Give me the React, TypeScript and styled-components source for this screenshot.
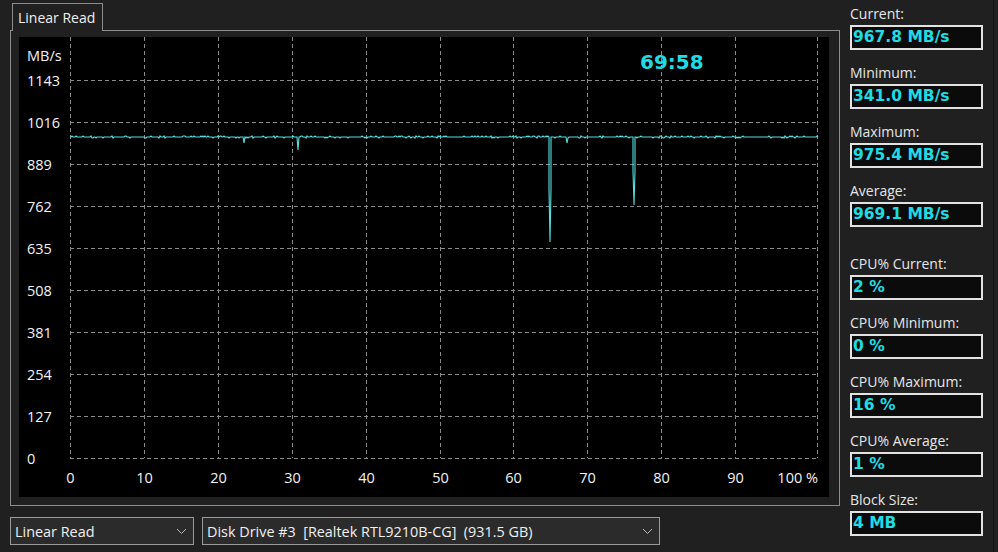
import styled, { createGlobalStyle } from "styled-components";

const GlobalStyle = createGlobalStyle`
  html, body {
    margin: 0;
    padding: 0;
    background: #202020;
  }
  body {
    font-family: "Open Sans", "Noto Sans", sans-serif;
  }
`;

const Window = styled.div`
  width: 998px;
  height: 552px;
  display: flex;
  background: #202020;
  overflow: hidden;
  color: #ececec;
`;

const Main = styled.div`
  width: 840px;
  display: flex;
  flex-direction: column;
  padding: 3px 0 0 10px;
  box-sizing: border-box;
`;

const TabStrip = styled.div`
  display: flex;
  padding-left: 2px;
  height: 27px;
`;

const Tab = styled.div`
  position: relative;
  z-index: 1;
  border: 1px solid #8c8c8c;
  border-bottom: none;
  background: #202020;
  padding: 0 7px 0 5px;
  margin-bottom: -1px;
  font-size: 14px;
  line-height: 27px;
  color: #f0f0f0;
`;

const Panel = styled.div`
  width: 830px;
  height: 476px;
  border: 1px solid #8c8c8c;
  padding: 6px 10px 8px 8px;
  box-sizing: border-box;
`;

const ChartBox = styled.div`
  width: 810px;
  height: 460px;
  background: #000;
  font-family: "Open Sans", "Noto Sans", sans-serif;

  svg {
    display: block;
  }
`;

const Controls = styled.div`
  display: flex;
  gap: 8px;
  margin-top: 11px;
`;

const Combo = styled.div<{ $w: number }>`
  width: ${(p) => p.$w}px;
  height: 28px;
  box-sizing: border-box;
  border: 1px solid #9a9a9a;
  background: #2b2b2b;
  display: flex;
  align-items: center;
  justify-content: space-between;
  padding: 0 6px 0 4px;
  font-size: 14.4px;
  color: #f0f0f0;
  white-space: pre;
`;

const Sidebar = styled.div`
  width: 154px;
  box-sizing: border-box;
  padding: 4px 0 0 10px;
  border-right: 1px solid #131313;
  display: flex;
  flex-direction: column;
`;

const Stat = styled.div<{ $gapTop?: number }>`
  display: flex;
  flex-direction: column;
  gap: 1px;
  margin-top: ${(p) => p.$gapTop ?? 0}px;
  margin-bottom: 13px;
`;

const StatLabel = styled.div`
  font-size: 14px;
  line-height: 20px;
  color: #e6e6e6;
`;

const StatBox = styled.div`
  width: 133px;
  height: 25px;
  box-sizing: border-box;
  border: 2px solid #e2e2e2;
  background: #0b0b0b;
  padding-left: 1px;
  font-family: "DejaVu Sans", Verdana, sans-serif;
  font-weight: bold;
  font-size: 15.5px;
  line-height: 21px;
  color: #1fdbe3;
`;

const Chevron = () => (
  <svg width="11" height="7" viewBox="0 0 11 7">
    <path d="M1 1 L5.5 5.5 L10 1" fill="none" stroke="#b8b8b8" strokeWidth="1" />
  </svg>
);

// chart coordinates (origin at the black area's top-left)
const GX0 = 51;
const GSTEP_X = 73.9;
const GX_END = 799;
const GY0 = 43;
const GSTEP = 42;

const yLabels = ["1143", "1016", "889", "762", "635", "508", "381", "254", "127", "0"];
const xLabels = ["0", "10", "20", "30", "40", "50", "60", "70", "80", "90"];

function buildLine(): string {
  const pts: string[] = [];
  let seed = 7;
  const rnd = () => {
    seed = (seed * 9301 + 49297) % 233280;
    return seed / 233280;
  };
  const spikes: Record<number, number[]> = {
    225: [106],
    279: [113],
    530: [152],
    531: [205],
    532: [152],
    548: [106],
    614: [134],
    615: [168],
    616: [134],
  };
  for (let x = GX0; x <= GX_END; x++) {
    if (spikes[x]) {
      if (x === 530 || x === 614) pts.push(`${x},100`);
      spikes[x].forEach((y) => pts.push(`${x},${y}`));
      if (x === 532 || x === 616) pts.push(`${x},100`);
      continue;
    }
    const r = rnd();
    const y = r < 0.12 ? 99 : r > 0.9 ? 101 : 100;
    pts.push(`${x},${y}`);
  }
  return pts.join(" ");
}

const linePoints = buildLine();

function Chart() {
  const gridBottom = GY0 + GSTEP * 9;
  const vx = [...xLabels.map((_, i) => Math.round(GX0 + i * GSTEP_X)), GX_END - 1];
  return (
    <ChartBox>
      <svg width="810" height="460" viewBox="0 0 810 460">
        {vx.map((x, i) => (
          <line
            key={`v${i}`}
            x1={x + 0.5}
            x2={x + 0.5}
            y1={0}
            y2={gridBottom}
            stroke="#8a8a8a"
            strokeDasharray="4 3"
          />
        ))}
        {yLabels.map((_, i) => (
          <line
            key={`h${i}`}
            x1={GX0}
            x2={GX_END}
            y1={GY0 + i * GSTEP + 0.5}
            y2={GY0 + i * GSTEP + 0.5}
            stroke="#8a8a8a"
            strokeDasharray="4 3"
          />
        ))}
        <text x={8} y={24} fill="#f2f2f2" fontSize="14.5">
          MB/s
        </text>
        {yLabels.map((l, i) => (
          <text key={l} x={8} y={GY0 + i * GSTEP + 6} fill="#f2f2f2" fontSize="14.5">
            {l}
          </text>
        ))}
        {xLabels.map((l, i) => (
          <text
            key={l}
            x={vx[i] + 0.5}
            y={446}
            fill="#f2f2f2"
            fontSize="14.5"
            textAnchor="middle"
          >
            {l}
          </text>
        ))}
        <text x={GX_END} y={446} fill="#f2f2f2" fontSize="14.5" textAnchor="end">
          100 %
        </text>
        <polyline points={linePoints} fill="none" stroke="#56dede" strokeWidth="1.1" />
        <text
          x={621}
          y={32}
          fill="#1fdbe3"
          fontSize="20"
          fontWeight="bold"
          fontFamily="'DejaVu Sans', Verdana, sans-serif"
        >
          69:58
        </text>
      </svg>
    </ChartBox>
  );
}

const stats: { label: string; value: string; gap?: number }[] = [
  { label: "Current:", value: "967.8 MB/s" },
  { label: "Minimum:", value: "341.0 MB/s" },
  { label: "Maximum:", value: "975.4 MB/s" },
  { label: "Average:", value: "969.1 MB/s" },
  { label: "CPU% Current:", value: "2 %", gap: 14 },
  { label: "CPU% Minimum:", value: "0 %" },
  { label: "CPU% Maximum:", value: "16 %" },
  { label: "CPU% Average:", value: "1 %" },
  { label: "Block Size:", value: "4 MB" },
];

export default function App() {
  return (
    <>
      <GlobalStyle />
      <Window>
        <Main>
          <TabStrip>
            <Tab>Linear Read</Tab>
          </TabStrip>
          <Panel>
            <Chart />
          </Panel>
          <Controls>
            <Combo $w={184}>
              <span>Linear Read</span>
              <Chevron />
            </Combo>
            <Combo $w={458}>
              <span>Disk Drive #3  [Realtek RTL9210B-CG]  (931.5 GB)</span>
              <Chevron />
            </Combo>
          </Controls>
        </Main>
        <Sidebar>
          {stats.map((s) => (
            <Stat key={s.label} $gapTop={s.gap}>
              <StatLabel>{s.label}</StatLabel>
              <StatBox>{s.value}</StatBox>
            </Stat>
          ))}
        </Sidebar>
      </Window>
    </>
  );
}
